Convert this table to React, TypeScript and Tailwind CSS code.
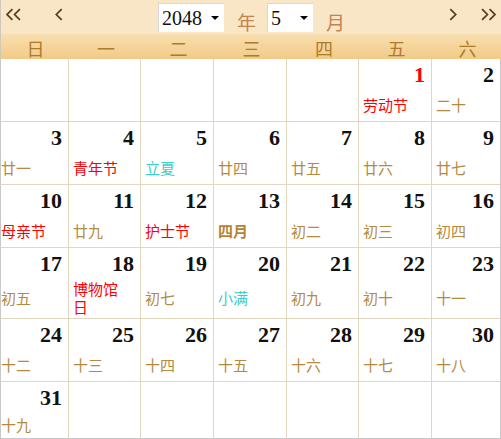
import React from "react";

type Cell = {
  d?: number;
  lunar?: string[];
  kind?: "lunar" | "fest" | "term" | "month";
  red?: boolean;
};

const rows: Cell[][] = [
  [{}, {}, {}, {}, {}, { d: 1, lunar: ["劳动节"], kind: "fest", red: true }, { d: 2, lunar: ["二十"] }],
  [
    { d: 3, lunar: ["廿一"] },
    { d: 4, lunar: ["青年节"], kind: "fest" },
    { d: 5, lunar: ["立夏"], kind: "term" },
    { d: 6, lunar: ["廿四"] },
    { d: 7, lunar: ["廿五"] },
    { d: 8, lunar: ["廿六"] },
    { d: 9, lunar: ["廿七"] },
  ],
  [
    { d: 10, lunar: ["母亲节"], kind: "fest" },
    { d: 11, lunar: ["廿九"] },
    { d: 12, lunar: ["护士节"], kind: "fest" },
    { d: 13, lunar: ["四月"], kind: "month" },
    { d: 14, lunar: ["初二"] },
    { d: 15, lunar: ["初三"] },
    { d: 16, lunar: ["初四"] },
  ],
  [
    { d: 17, lunar: ["初五"] },
    { d: 18, lunar: ["博物馆", "日"], kind: "fest" },
    { d: 19, lunar: ["初七"] },
    { d: 20, lunar: ["小满"], kind: "term" },
    { d: 21, lunar: ["初九"] },
    { d: 22, lunar: ["初十"] },
    { d: 23, lunar: ["十一"] },
  ],
  [
    { d: 24, lunar: ["十二"] },
    { d: 25, lunar: ["十三"] },
    { d: 26, lunar: ["十四"] },
    { d: 27, lunar: ["十五"] },
    { d: 28, lunar: ["十六"] },
    { d: 29, lunar: ["十七"] },
    { d: 30, lunar: ["十八"] },
  ],
  [{ d: 31, lunar: ["十九"] }, {}, {}, {}, {}, {}, {}],
];

const rowH = ["h-[63px]", "h-[63px]", "h-[63px]", "h-[71px]", "h-[63px]", "h-[57px]"];
const weekdays = ["日", "一", "二", "三", "四", "五", "六"];

const cjk = { fontFamily: '"Noto Sans CJK SC", "Noto Sans", sans-serif' };
const serif = { fontFamily: '"Liberation Serif", "Noto Sans CJK SC", serif' };

function Chevron({ dir, double }: { dir: "l" | "r"; double?: boolean }) {
  const pts = dir === "l" ? ["6,1 1,6 6,11", "13,1 8,6 13,11"] : ["1,1 6,6 1,11", "8,1 13,6 8,11"];
  return (
    <svg width={double ? 15 : 8} height="13" viewBox={double ? "0 0 14 12" : "0 0 7 12"} className="block">
      <polyline points={dir === "l" && !double ? "6,1 1,6 6,11" : pts[0]} fill="none" stroke="#5c3a1c" strokeWidth="1.6" />
      {double && <polyline points={pts[1]} fill="none" stroke="#5c3a1c" strokeWidth="1.6" />}
    </svg>
  );
}

function Select({ value, w }: { value: string; w: string }) {
  return (
    <div className={`${w} h-[29px] bg-white border-t border-l border-[#d8d8d8] flex items-center justify-between pl-[3px] pr-[5px]`}>
      <span className="text-[20px] leading-none text-[#111]" style={serif}>
        {value}
      </span>
      <span className="w-0 h-0 border-l-[4px] border-r-[4px] border-t-[4px] border-l-transparent border-r-transparent border-t-black" />
    </div>
  );
}

export default function App() {
  return (
    <div className="w-[501px] h-[439px] bg-white overflow-hidden flex flex-col">
      {/* top bar */}
      <div className="h-[34px] bg-[#f8e6c6] flex items-center relative border-l border-[#d0c8b8]">
        <div className="absolute left-[5px] top-[8px]">
          <Chevron dir="l" double />
        </div>
        <div className="absolute left-[54px] top-[8px]">
          <Chevron dir="l" />
        </div>
        <div className="absolute left-[157px] top-[3px] flex items-center">
          <Select value="2048" w="w-[66px]" />
          <span className="ml-[13px] text-[19px] text-[#c3834e] leading-none mt-[8px]" style={cjk}>
            年
          </span>
          <div className="ml-[11px]">
            <Select value="5" w="w-[46px]" />
          </div>
          <span className="ml-[13px] text-[19px] text-[#c3834e] leading-none mt-[8px]" style={cjk}>
            月
          </span>
        </div>
        <div className="absolute left-[448px] top-[8px]">
          <Chevron dir="r" />
        </div>
        <div className="absolute left-[480px] top-[8px]">
          <Chevron dir="r" double />
        </div>
      </div>
      {/* header */}
      <div className="h-[25px] grid grid-cols-[69px_72px_73px_73px_72px_73px_69px] bg-gradient-to-b from-[#f9dfb0] to-[#f2ca86] border-l border-[#d0c8b8]">
        {weekdays.map((w) => (
          <div key={w} className="flex items-center justify-center text-[18px] leading-none text-[#ae7a2c] pt-[2px]" style={cjk}>
            {w}
          </div>
        ))}
      </div>
      {/* body */}
      {rows.map((r, ri) => (
        <div key={ri} className={`${rowH[ri]} grid grid-cols-[69px_72px_73px_73px_72px_73px_69px]`}>
          {r.map((c, ci) => {
            const color =
              c.kind === "fest"
                ? "text-[#ff0000]"
                : c.kind === "term"
                ? "text-[#3ccfc9]"
                : c.kind === "month"
                ? "text-[#b38436] font-bold"
                : "text-[#b58a40]";
            return (
              <div
                key={ci}
                className={`flex flex-col border-b border-r ${ci === 0 ? "border-l border-l-[#c8c8c8]" : ""} ${
                  ci === 6 ? "border-r-[#c8c8c8]" : "border-r-[#e3d8bf]"
                } ${ri === 5 ? "border-b-[#c8c8c8]" : "border-b-[#e3d8bf]"}`}
              >
                <div
                  className={`h-[30px] text-right pr-[6px] pt-[4px] text-[22px] leading-[24px] font-bold ${
                    c.red ? "text-[#ff0000]" : "text-[#111]"
                  }`}
                  style={serif}
                >
                  {c.d ?? ""}
                </div>
                <div className={`flex-1 flex flex-col justify-center ${ci === 0 ? "pl-0" : "pl-[4px]"} pb-[1px]`}>
                  {c.lunar && (
                    <div className={`text-[15px] leading-[18px] ${color}`} style={cjk}>
                      {c.lunar.map((l, li) => (
                        <React.Fragment key={li}>
                          {li > 0 && <br />}
                          {l}
                        </React.Fragment>
                      ))}
                    </div>
                  )}
                </div>
              </div>
            );
          })}
        </div>
      ))}
    </div>
  );
}
